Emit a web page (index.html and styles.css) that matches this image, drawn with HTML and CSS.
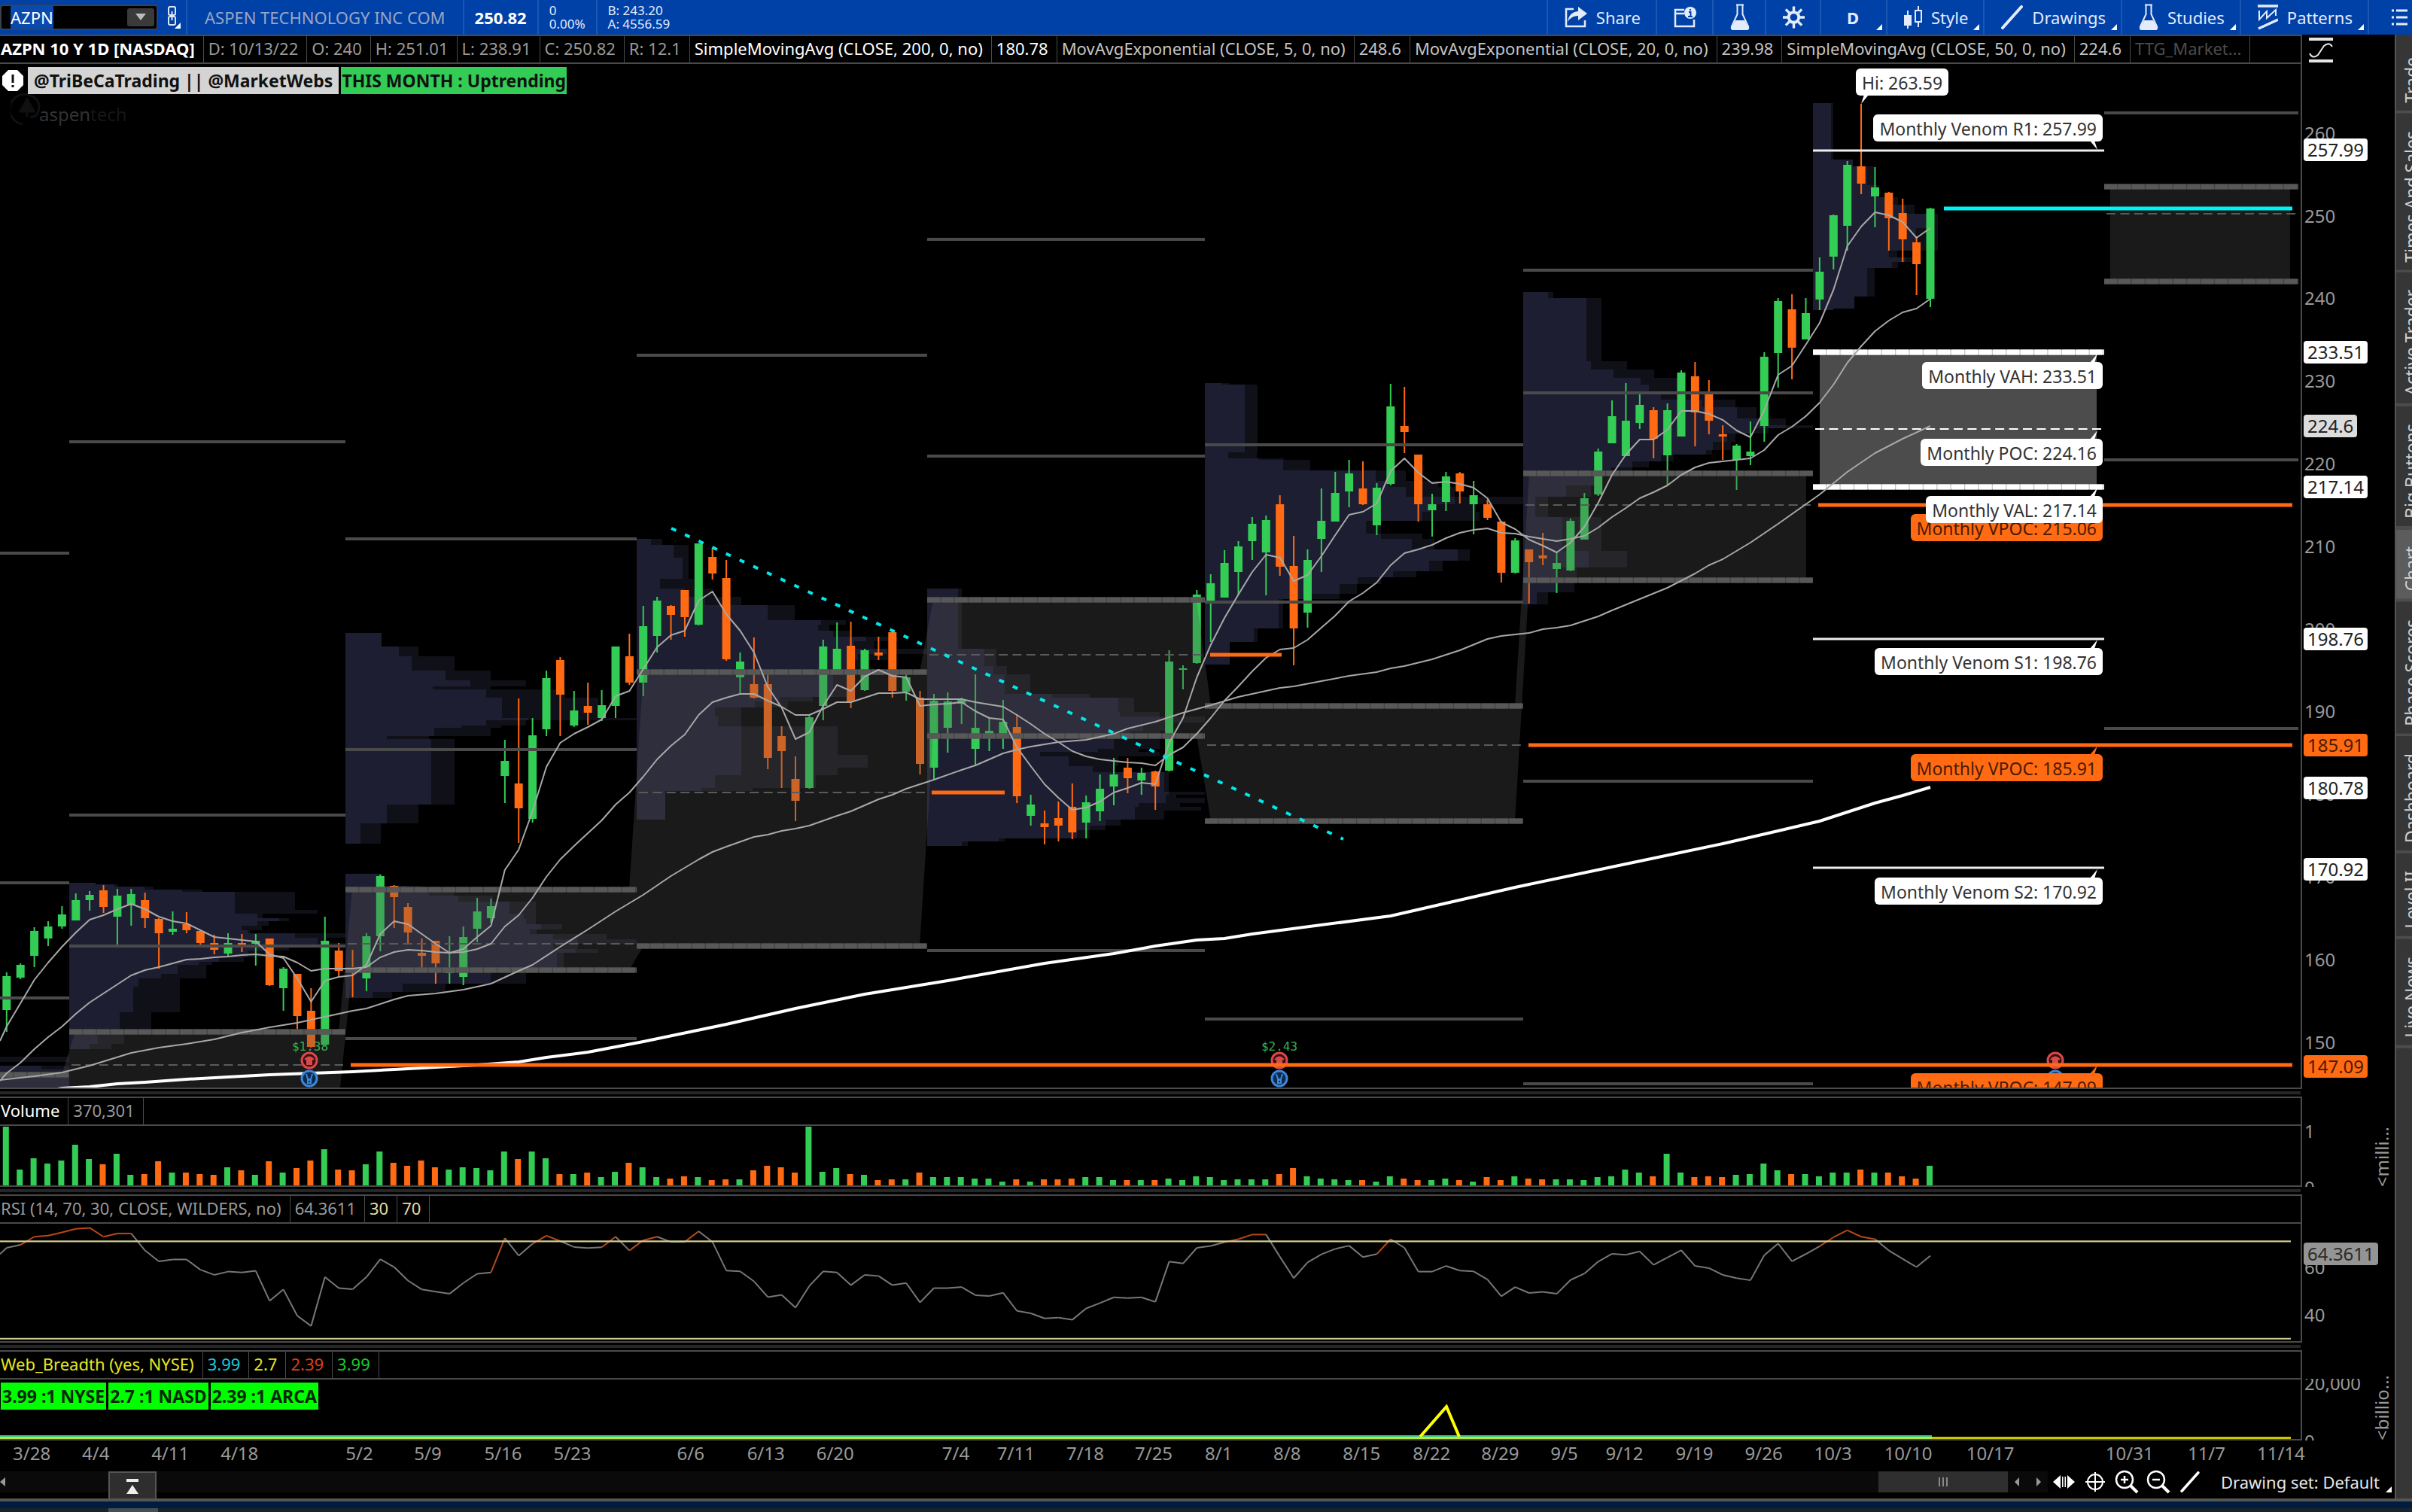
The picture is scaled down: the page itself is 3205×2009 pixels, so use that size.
FILE: index.html
```html
<!DOCTYPE html>
<html lang="en">
<head>
  <meta charset="UTF-8">
  <meta name="viewport" content="width=device-width, initial-scale=1.0">
  <title>AZPN - Charts</title>
  <link rel="stylesheet" href="styles.css">
</head>
<body>

  <!-- Shared icon shapes -->
  <svg class="defs" aria-hidden="true">
    <symbol id="i-flask" viewBox="0 0 26 36">
      <path d="M8 1.500h10M9.500 2v12L2 30q-1 4 2 4h18q3 0 2-4L16.500 14V2" fill="none" stroke="currentColor" stroke-width="2"/>
      <path d="M7 22h12l5 9q1 4-2 4H4q-3 0-2-4z" fill="currentColor"/>
    </symbol>
    <symbol id="i-pencil" viewBox="0 0 29 32">
      <path d="M2 30L27 2" stroke="currentColor" stroke-width="4" stroke-linecap="round"/>
    </symbol>
    <symbol id="i-zoom" viewBox="0 0 32 32">
      <circle cx="13" cy="13" r="11" fill="none" stroke="currentColor" stroke-width="2.500"/>
      <path d="M21 21l9 9" stroke="currentColor" stroke-width="4"/>
      <path d="M8 13h10" stroke="currentColor" stroke-width="2.500"/>
    </symbol>
  </svg>

  <header class="toolbar">
    <div class="symbol-box">
      <label class="sr" for="symbol">Symbol</label>
      <input id="symbol" type="text" value="AZPN">
      <button class="drop" aria-label="Symbol list"><svg viewBox="0 0 36 24"><path d="M11 7h14l-7 9z" fill="#bbb"/></svg></button>
    </div>
    <button class="link" aria-label="Link">
      <svg width="20" height="32" viewBox="0 0 20 32" fill="none" stroke="#dfe6f6" stroke-width="2">
        <rect x="3" y="2" width="9" height="11" rx="2"/><rect x="3" y="15" width="9" height="11" rx="2"/><path d="M7.500 8v12"/>
        <path d="M19 23v8h-8z" fill="#fff" stroke="none"/>
      </svg>
    </button>
    <div class="quote company">ASPEN TECHNOLOGY INC COM</div>
    <div class="quote last">250.82</div>
    <div class="quote small">0<br>0.00%</div>
    <div class="quote small">B: 243.20<br>A: 4556.59</div>
    <div class="spacer"></div>
    <button class="tool">
      <svg width="30" height="28" viewBox="0 0 30 28"><path d="M12 3H2v23h25v-8" fill="none" stroke="currentColor" stroke-width="2.500"/><path d="M4 20Q6 7 18 6V0l12 9-12 9v-6Q9 12 4 20z" fill="currentColor"/></svg>
      <span>Share</span>
    </button>
    <button class="tool" aria-label="Info">
      <svg width="31" height="28" viewBox="0 0 31 28"><path d="M14 4H2v22h25V17M2 9h12" fill="none" stroke="currentColor" stroke-width="2.500"/><circle cx="22" cy="8" r="8" fill="currentColor"/><path d="M22 3v2M20 7h2.500v6M19 13h6" stroke="#0041a8" stroke-width="2" fill="none"/></svg>
    </button>
    <button class="tool" aria-label="Lab"><svg width="26" height="36"><use href="#i-flask"/></svg></button>
    <button class="tool" aria-label="Settings">
      <svg width="29" height="30" viewBox="-15 -15 30 30" fill="none" stroke="currentColor"><circle r="7" stroke-width="4"/><path d="M0-8V-15M0 8V15M-8 0H-15M8 0H15M-6-6L-11-11M6 6L11 11M6-6L11-11M-6 6L-11 11" stroke-width="3.500"/></svg>
    </button>
    <button class="tool menu period">D</button>
    <button class="tool menu">
      <svg width="24" height="30" viewBox="0 0 24 30"><path d="M5 6v24M19 0v28" stroke="currentColor" stroke-width="2"/><rect y="12" width="10" height="14" fill="currentColor"/><rect x="15" y="6" width="8" height="15" fill="#0041a8" stroke="currentColor" stroke-width="2"/></svg>
      <span>Style</span>
    </button>
    <button class="tool menu"><svg width="29" height="32"><use href="#i-pencil"/></svg><span>Drawings</span></button>
    <button class="tool menu"><svg width="26" height="36"><use href="#i-flask"/></svg><span>Studies</span></button>
    <button class="tool menu">
      <svg width="27" height="34" viewBox="0 0 27 34" fill="none" stroke="currentColor"><path d="M0 2h27M1 32L27 20" stroke-width="3.500"/><path d="M2 8v12L12 9v9L24 7v8" stroke-width="2"/></svg>
      <span>Patterns</span>
    </button>
    <button class="tool list" aria-label="Menu">
      <svg width="21" height="24" viewBox="0 0 21 24" stroke="currentColor" stroke-width="3"><path d="M0 3h3M6 3h15M0 12h3M6 12h15M0 21h3M6 21h15"/></svg>
    </button>
  </header>

  <div class="main">
    <main class="work">

      <section class="pane price">
        <div class="left">
          <div class="head">
            <b>AZPN 10 Y 1D [NASDAQ]</b>
            <span>D: 10/13/22</span><span>O: 240</span><span>H: 251.01</span><span>L: 238.91</span><span>C: 250.82</span><span>R: 12.1</span>
            <span class="white">SimpleMovingAvg (CLOSE, 200, 0, no)</span><span class="white">180.78</span>
            <span class="light">MovAvgExponential (CLOSE, 5, 0, no)</span><span class="light">248.6</span>
            <span class="light">MovAvgExponential (CLOSE, 20, 0, no)</span><span class="light">239.98</span>
            <span class="light">SimpleMovingAvg (CLOSE, 50, 0, no)</span><span class="light">224.6</span>
            <span class="dim">TTG_Market...</span>
          </div>
          <div class="plot" id="pricePlot">
            <svg id="priceSvg" viewBox="0 85 3057 1360" preserveAspectRatio="none"></svg>
            <div class="watermark">
              <svg width="42" height="44" viewBox="0 0 42 44" fill="none" stroke="#101010" stroke-width="3"><path d="M16 42A20 20 0 1 1 38 16Q38 34 26 32"/><path d="M22 9l9 16H13z" fill="#101010"/><path d="M22 22v10"/></svg>
              <span><b>aspen</b>tech</span>
            </div>
            <div class="tags">
              <svg class="warn" width="28" height="28" viewBox="0 0 28 28"><path d="M8 0h12l8 8v12l-8 8H8l-8-8V8z" fill="#fff"/><path d="M14 6v11M14 20v3" stroke="#111" stroke-width="3"/></svg>
              <span class="tag grey">@TriBeCaTrading || @MarketWebs</span>
              <span class="tag green">THIS MONTH : Uptrending</span>
            </div>
          </div>
        </div>
        <div class="axis">
          <button class="scale" aria-label="Price scale">
            <svg width="32" height="33" viewBox="0 0 32 33" fill="none" stroke="#e6e6e6"><path d="M0 2h32M0 31h32" stroke-width="4"/><path d="M1 21q4 8 11 2L20 11q7-6 11 1" stroke-width="2"/></svg>
          </button>
          <div class="ticks" id="priceAxis"></div>
        </div>
      </section>

      <div class="split"></div>

      <section class="pane">
        <div class="left">
          <div class="head"><span class="white">Volume</span><span>370,301</span></div>
          <div class="plot low"><svg id="volSvg" viewBox="0 0 3057 79" preserveAspectRatio="none"></svg></div>
        </div>
        <div class="axis">
          <div class="ticks">
            <span class="tick" style="top:10%">1</span><span class="tick" style="top:101%">0</span>
          </div>
          <span class="unit">&lt;milli...</span>
        </div>
      </section>

      <div class="split"></div>

      <section class="pane">
        <div class="left">
          <div class="head"><span>RSI (14, 70, 30, CLOSE, WILDERS, no)</span><span>64.3611</span><span class="cream">30</span><span class="cream">70</span></div>
          <div class="plot mid"><svg id="rsiSvg" viewBox="0 510 3057 434" preserveAspectRatio="none"></svg></div>
        </div>
        <div class="axis">
          <div class="ticks">
            <span class="tick" style="top:37%">60</span><span class="tick" style="top:77%">40</span>
            <span class="badge rsi" style="top:26%">64.3611</span>
          </div>
        </div>
      </section>

      <div class="split"></div>

      <section class="pane">
        <div class="left">
          <div class="head"><span class="yellow">Web_Breadth (yes, NYSE)</span><span class="cyan">3.99</span><span class="yellow">2.7</span><span class="red">2.39</span><span class="lime">3.99</span></div>
          <div class="plot low">
            <svg viewBox="0 1833 3057 79" preserveAspectRatio="none">
              <path d="M2566 1910.500H3044" stroke="#c8c800" stroke-width="3"/>
              <path d="M0 1908H2567" stroke="#2fc48c" stroke-width="2"/>
              <path d="M0 1910.500H2567" stroke="#b4e84a" stroke-width="3"/>
              <path d="M1887 1909L1922 1869L1939 1909" fill="none" stroke="#ff0" stroke-width="4"/>
            </svg>
            <div class="ratios"><span>3.99 :1 NYSE</span><span>2.7 :1 NASD</span><span>2.39 :1 ARCA</span></div>
          </div>
        </div>
        <div class="axis">
          <div class="ticks">
            <span class="tick" style="top:7%">20,000</span><span class="tick" style="top:101%">0</span>
          </div>
          <span class="unit">&lt;billio...</span>
        </div>
      </section>

      <div class="dates" id="dates"></div>

      <footer class="bottom">
        <div class="track">
          <svg class="arrow" width="8" height="12" viewBox="0 0 8 12"><path d="M7 0v12L0 6z" fill="#999"/></svg>
          <button class="up" aria-label="Show panel"><svg width="16" height="20" viewBox="0 0 16 20" fill="#eee"><path d="M0 0h16v4H0zM8 8l8 12H0z"/></svg></button>
          <div class="thumb"><i></i><i></i><i></i></div>
          <svg class="arrows" width="36" height="12" viewBox="0 0 36 12" fill="#999"><path d="M6 0v12L0 6zM29 0v12l6-6z"/></svg>
        </div>
        <button class="nav" aria-label="Fit"><svg width="29" height="20" viewBox="0 0 29 20" fill="#fff"><path d="M0 10L10 1v18zM29 10L19 1v18zM12 3h1.500v14H12zM15.500 3H17v14h-1.500z"/></svg></button>
        <button class="nav" aria-label="Crosshair"><svg width="26" height="26" viewBox="0 0 26 26" fill="none" stroke="#fff" stroke-width="2"><circle cx="13" cy="13" r="10"/><path d="M13 0v26M0 13h26"/></svg></button>
        <button class="nav" aria-label="Zoom in"><svg width="32" height="32"><use href="#i-zoom"/><path d="M13 8v10" stroke="#fff" stroke-width="2.500"/></svg></button>
        <button class="nav" aria-label="Zoom out"><svg width="32" height="32"><use href="#i-zoom"/></svg></button>
        <button class="nav" aria-label="Draw"><svg width="28" height="28"><use href="#i-pencil"/></svg></button>
        <button class="set">Drawing set: Default</button>
      </footer>
    </main>

    <nav class="side">
      <button>Trade</button>
      <button>Times And Sales</button>
      <button>Active Trader</button>
      <button>Big Buttons</button>
      <button class="on">Chart</button>
      <button>Phase Scores</button>
      <button>Dashboard</button>
      <button>Level II</button>
      <button>Live News</button>
    </nav>
  </div>

  <div class="taskbar"><span></span></div>

  <script src="chart.js"></script>
</body>
</html>
```

FILE: styles.css
```css
* {
  box-sizing: border-box;
}

html, body {
  margin: 0;
  height: 100%;
  background: #000;
  overflow: hidden;
}

body {
  display: flex;
  flex-direction: column;
  font-family: "Noto Sans", "Open Sans", sans-serif;
  font-size: 23px;
  line-height: 30px;
  color: #999;
}

button, input {
  font: inherit;
  color: inherit;
  background: none;
  border: 0;
  padding: 0;
  margin: 0;
}

svg {
  display: block;
  flex: none;
}

.defs {
  position: absolute;
  width: 0;
  height: 0;
}

.sr {
  position: absolute;
  width: 1px;
  height: 1px;
  overflow: hidden;
  clip-path: inset(50%);
}

/* Top toolbar */
.toolbar {
  flex: none;
  display: flex;
  align-items: stretch;
  height: 46px;
  background: #0041a8;
  color: #e4ebfa;
  font-size: 22px;
  overflow: hidden;
}

.symbol-box {
  display: flex;
  align-items: center;
  align-self: center;
  width: 210px;
  height: 34px;
  padding: 0 3px 0 12px;
  background: #000;
  border: 2px solid #3b4148;
  border-radius: 4px;
}

#symbol {
  flex: 1;
  min-width: 0;
  height: 30px;
  outline: none;
  color: #fff;
}

#symbol::selection {
  background: #0a49ad;
  color: #fff;
}

.drop {
  width: 36px;
  height: 24px;
  background: #3a3a3a;
  border-radius: 3px;
}

.link {
  width: 37px;
  padding-left: 11px;
}

.quote {
  border-left: 2px solid #1a56b4;
  padding: 0 14px;
  line-height: 46px;
  white-space: nowrap;
}

.company {
  padding: 0 23px;
  color: #9aa6c2;
}

.last {
  font-weight: bold;
  color: #fff;
}

.small {
  font-size: 17px;
  line-height: 18px;
  padding-top: 5px;
}

.small:last-of-type {
  border-right: 2px solid #1a56b4;
}

.spacer {
  flex: 1;
}

.tool {
  position: relative;
  display: flex;
  align-items: center;
  gap: 12px;
  padding: 0 20px 0 22px;
  border-left: 2px solid #1a56b4;
}

.menu::after {
  content: "";
  position: absolute;
  right: 5px;
  bottom: 6px;
  border-left: 8px solid transparent;
  border-bottom: 8px solid #fff;
}

.period {
  padding: 0 36px 0 34px;
  font-weight: bold;
}

.list {
  width: 59px;
  padding: 0 0 0 30px;
}

/* Page body */
.main {
  flex: 1;
  min-height: 0;
  display: flex;
}

.work {
  flex: 1;
  min-width: 0;
  display: flex;
  flex-direction: column;
}

.pane {
  flex: none;
  display: flex;
}

.price {
  flex: 1;
  min-height: 0;
}

.left {
  flex: 1;
  min-width: 0;
  display: flex;
  flex-direction: column;
  border: solid #4a4a4a;
  border-width: 2px 2px 2px 0;
}

.head {
  flex: none;
  display: flex;
  height: 37px;
  font-size: 22px;
  line-height: 33px;
  border-bottom: 2px solid #4a4a4a;
  white-space: nowrap;
  overflow: hidden;
}

.head > * {
  padding: 0 11px 0 6px;
  border-right: 1px solid #4a4a4a;
}

.head > :first-child {
  padding-left: 1px;
}

.head b, .white {
  color: #fff;
}

.light { color: #c4c4c4; }
.dim { color: #4c4c4c; }
.cream { color: #e3dca0; }
.yellow { color: #e6e620; }
.cyan { color: #1fc8dc; }
.red { color: #d8401a; }
.lime { color: #18cc28; }

.plot {
  position: relative;
  overflow: hidden;
}

.price .plot {
  flex: 1;
  min-height: 0;
}

.low {
  height: 79px;
}

.mid {
  height: 156px;
}

.plot > svg {
  position: absolute;
  width: 100%;
  height: 100%;
}

.tags {
  position: relative;
  display: flex;
  align-items: center;
  gap: 3px;
  padding: 4px 3px;
}

.warn {
  margin-right: 3px;
}

.tag {
  padding: 0 1px;
  height: 36px;
  line-height: 36px;
  color: #111;
  font-weight: bold;
  white-space: nowrap;
}

.grey {
  background: #d4d4d4;
  padding: 0 8px;
}

.green {
  background: #33cc55;
}

.watermark {
  position: absolute;
  left: 14px;
  top: 38px;
  display: flex;
  align-items: flex-end;
  color: #161616;
  font-size: 24px;
}

.watermark span {
  margin-left: -4px;
}

.watermark b {
  color: #333;
  font-weight: normal;
}

/* Bubbles on the price chart */
.callout {
  position: absolute;
  height: 36px;
  padding: 0 8px;
  line-height: 38px;
  border-radius: 6px;
  background: #fff;
  color: #333;
  white-space: nowrap;
}

.callout::after {
  content: "";
  position: absolute;
  right: 7px;
  top: -11px;
  width: 10px;
  height: 12px;
  background: inherit;
  clip-path: polygon(100% 0, 0 100%, 60% 100%);
}

.callout.down::after {
  top: 35px;
  clip-path: polygon(0 0, 60% 0, 100% 100%);
}

.callout.hi::after {
  left: 7px;
  right: auto;
  top: 35px;
  clip-path: polygon(40% 0, 100% 0, 0 100%);
}

.callout.orange {
  background: #ff6a13;
  color: #4a1c00;
}

.dividend {
  position: absolute;
  transform: translate(-50%, -50%);
  font: 16px/18px "DejaVu Sans Mono", monospace;
  color: #33b050;
}

/* Right hand axis */
.axis {
  position: relative;
  flex: none;
  width: 123px;
  padding-top: 38px;
  display: flex;
  font-size: 24px;
}

.scale {
  position: absolute;
  left: 9px;
  top: 4px;
}

.ticks {
  position: relative;
  flex: 1;
  overflow: hidden;
}

.tick, .badge {
  position: absolute;
  left: 3px;
  transform: translateY(-50%);
}

.badge {
  left: 2px;
  height: 30px;
  line-height: 30px;
  padding: 0 5px;
  border-radius: 4px;
  background: #fff;
  color: #222;
}

.badge.up { background: #33cc55; color: #0b3315; }
.badge.orange { background: #ff6a13; color: #4a1c00; }
.badge.soft { background: #dcdcdc; }
.badge.rsi { background: #949494; color: #2a2a2a; }

.unit {
  position: absolute;
  right: 2px;
  bottom: 0;
  writing-mode: vertical-rl;
  transform: rotate(180deg);
}

.split {
  flex: none;
  height: 10px;
  margin-right: 125px;
  background: linear-gradient(#000 3px, #262626 3px, #262626 7px, #000 7px);
}

.ratios {
  position: relative;
  display: flex;
  gap: 3px;
  padding: 4px 1px;
}

.ratios span {
  padding: 0 2px;
  line-height: 36px;
  background: #0f0;
  color: #062806;
  font-weight: bold;
}

.dates {
  position: relative;
  flex: none;
  height: 41px;
  margin-right: 123px;
  font-size: 24px;
  line-height: 33px;
}

.dates span {
  position: absolute;
  white-space: nowrap;
}

/* Scroll bar and zoom tools */
.bottom {
  flex: none;
  display: flex;
  align-items: flex-start;
  height: 36px;
  color: #e6e6e6;
  font-size: 22px;
  line-height: 28px;
}

.track {
  flex: 1;
  display: flex;
  align-items: center;
  height: 28px;
  background: #0a0a0a;
}

.up {
  align-self: flex-start;
  display: flex;
  justify-content: center;
  align-items: center;
  width: 64px;
  height: 37px;
  margin-left: 136px;
  background: #2e2e2e;
  border: 2px solid #555;
  border-bottom: 0;
}

.thumb {
  display: flex;
  justify-content: center;
  align-items: center;
  gap: 3px;
  width: 172px;
  height: 28px;
  margin-left: auto;
  background: #2f2f2f;
}

.thumb i {
  width: 2px;
  height: 12px;
  background: #888;
}

.arrows {
  margin: 0 8px 0 9px;
}

.nav {
  display: flex;
  justify-content: center;
  align-items: center;
  width: 42px;
  height: 28px;
  color: #fff;
}

.set {
  position: relative;
  padding: 0 20px 0 20px;
  white-space: nowrap;
}

.set::after {
  content: "";
  position: absolute;
  right: 4px;
  bottom: 0;
  border-left: 8px solid transparent;
  border-bottom: 8px solid #fff;
}

/* Gadget tabs, the strip runs past the window edge */
.side {
  flex: none;
  display: flex;
  flex-direction: column;
  align-items: flex-start;
  width: 23px;
  padding-top: 7px;
  background: #363636;
  border-left: 2px solid #555;
  overflow: hidden;
}

.side button {
  flex: none;
  display: flex;
  justify-content: flex-start;
  align-items: flex-start;
  width: 40px;
  padding: 10px 5px 23px 5px;
  writing-mode: vertical-rl;
  transform: rotate(180deg);
  color: #d0d0d0;
  background: #363636;
  border-top: 4px solid #4c4c4c;
  white-space: nowrap;
}

.side .on {
  background: #5c5c5c;
}

.taskbar {
  flex: none;
  height: 18px;
  border-top: 4px solid #555;
  background: linear-gradient(#001d40 9px, #1a222b 9px);
}

.taskbar span {
  display: block;
  width: 66px;
  height: 5px;
  margin: 9px 0 0 144px;
  background: #474c55;
}
```

FILE: chart.js
```js
const GREEN = '#33cc55';
const ORANGE = '#ff6a13';
const W = 3057, TOP = 85, H = 1360;

const xAt = i => 8.8 + i * 18.39;
const yAt = price => 199.7 + (257.99 - price) * 10.956;
const pctX = x => (x / W * 100).toFixed(3) + '%';
const pctY = y => ((y - TOP) / H * 100).toFixed(3) + '%';

function line(x1, y1, x2, y2, color, width, dash) {
  return `<line x1="${x1}" y1="${y1}" x2="${x2}" y2="${y2}" stroke="${color}" stroke-width="${width}"${dash ? ` stroke-dasharray="${dash}"` : ''}/>`;
}

// each candle: direction, high, body top, body bottom, low
const candles = `g1292,1297,1342,1371 g1280,1282,1299,1301 g1232,1237,1270,1285 g1224,1231,1247,1257 g1204,1215,1231,1234
g1187,1196,1223,1223 g1184,1189,1196,1210 o1176,1183,1205,1213 g1181,1190,1218,1255 g1181,1188,1203,1230
o1186,1196,1220,1233 o1220,1221,1240,1287 g1211,1234,1238,1242 o1212,1228,1236,1240 o1236,1237,1253,1256
o1242,1253,1262,1268 g1240,1253,1267,1271 o1241,1253,1257,1265 g1241,1250,1254,1283 o1247,1247,1309,1310
g1285,1287,1313,1343 o1294,1294,1350,1367 o1313,1343,1391,1392 g1218,1250,1388,1389 o1253,1263,1290,1299
o1262,1290,1292,1325 g1240,1244,1300,1317 g1162,1164,1244,1264 o1176,1177,1192,1233 o1200,1205,1239,1253
o1247,1266,1270,1286 o1250,1250,1280,1307 g1244,1291,1293,1307 g1231,1245,1298,1309 g1193,1211,1234,1252
g1194,1204,1220,1226 g983,1011,1031,1067 o928,1041,1074,1120 g954,977,1088,1093 g891,901,969,978
o873,877,923,978 g918,944,964,966 o907,938,947,963 g917,937,954,958 g859,859,938,954
o842,872,907,910 g805,832,907,925 g793,798,845,867 o804,805,817,850 o784,784,820,846
g722,722,830,831 o728,740,762,770 o744,768,876,878 g867,879,900,922 o847,909,927,928
o896,909,1007,1022 o965,978,998,1047 o1005,1035,1064,1091 g949,953,1047,1048 g850,859,938,957
g827,862,890,891 o826,858,932,941 g862,864,917,918 o846,867,871,877 o839,840,918,927
g895,900,919,931 o918,927,1015,1029 g922,931,1020,1037 g920,932,967,1000 g927,929,935,962
g896,967,995,1017 g954,971,976,998 g930,959,976,995 o949,966,1058,1067 g1056,1069,1084,1097
o1077,1094,1099,1122 o1065,1087,1097,1118 o1041,1072,1106,1115 g1057,1066,1093,1114 g1029,1048,1078,1091
g1007,1029,1045,1070 o1007,1020,1034,1054 g1020,1027,1037,1056 o1024,1025,1045,1076 g864,879,1024,1025
g884,888,890,916 g784,790,881,882 g763,775,801,853 g731,748,794,794 g719,726,760,790
g687,696,719,744 g685,691,734,791 o658,670,753,765 o712,752,835,884 g730,744,814,834
g649,692,716,760 g627,655,693,693 g611,629,653,674 o613,649,670,671 g642,648,698,711
g510,540,643,645 o514,566,574,602 o604,604,670,693 g656,670,678,713 g627,633,667,679
o627,629,653,669 g639,658,670,710 o664,670,688,691 o692,693,761,774 g715,718,761,762
o730,730,747,802 o708,738,742,751 g733,748,756,788 g689,692,758,759 g655,662,717,717
g596,600,657,659 g532,553,589,589 g509,559,606,606 g522,538,562,570 o541,545,583,609
g536,545,605,645 g492,495,580,580 o481,500,548,593 o505,524,559,577 o565,577,580,611
g590,592,611,651 g560,600,606,618 g468,474,566,587 g396,400,469,515 o391,411,462,504
g396,416,451,451 g342,361,398,412 g285,286,341,358 g214,219,300,333 o138,221,244,258
g222,249,261,302 o255,256,290,333 o264,283,318,348 o314,322,351,392 g276,277,397,408`.split(/\s+/);

const ema5 = [1364,1333,1302,1279,1258,1239,1222,1216,1208,1201,1208,1218,1224,1227,1236,1245,1247,1249,1251,1268,1273,1300,1331,1303,1298,1296,1282,1241,1224,1228,1241,1254,1266,1261,1245,1230,1156,1129,1078,1019,987,975,966,956,925,918,889,
  860,844,838,798,786,816,838,867,913,940,982,973,938,910,918,899,890,898,900,938,936,935,933,945,954,956,993,1018,1042,1060,1076,1073,1065,1053,1047,1040,1042,987,954,900,857,821,790,
  760,737,741,772,764,739,711,684,680,669,626,609,628,642,640,643,648,662,694,703,717,725,734,721,700,668,631,604,584,584,571,546,546,550,558,572,581,545,498,486,458,429,385,327,301,282,286,295,316,303];

const ema20 = [1426,1412,1394,1378,1364,1347,1332,1320,1308,1296,1289,1285,1280,1275,1274,1272,1271,1269,1268,1270,1271,1279,1290,1287,1287,1287,1285,1272,1265,1262,1263,1265,1266,1265,1261,1254,1231,1216,1193,1165,1142,1124,1107,1090,1069,1053,1032,
  1009,991,976,950,933,927,922,922,931,939,950,950,942,933,933,927,921,921,920,929,929,929,929,933,936,939,950,962,975,986,998,1005,1009,1011,1013,1014,1017,1003,993,975,954,931,912,
  892,874,863,861,850,834,818,799,788,774,751,735,730,724,715,708,704,702,708,709,713,716,719,716,712,701,687,675,662,654,645,631,621,615,613,611,609,598,578,567,553,535,511,482,460,440,426,415,410,397];

// slower averages, as bar index / y pairs
const sma50 = [[0,1434],[2,1430],[4,1425],[6,1416],[9,1399],[11,1392],[13,1387],[15,1381],[17,1372],[19,1365],[21,1359],[23,1351],[25,1343],[26,1340],[28,1328],[29,1323],[31,1320],[33,1315],[35,1307],[37,1290],[38,1282],[40,1258],[42,1235],[44,1211],[46,1189],[48,1164],[50,1142],[51,1132],[52,1125],[54,1112],[55,1109],[56,1104],[57,1101],[58,1097],[60,1084],[61,1078],[63,1062],[64,1056],[65,1048],[67,1036],[69,1023],[70,1017],[72,1001],[73,996],[74,992],[76,986],[78,983],[80,975],[81,968],[83,959],[85,947],[87,937],[89,926],[92,914],[93,912],[95,905],[97,898],[99,893],[100,888],[101,885],[103,876],[105,864],[107,849],[108,845],[110,841],[111,836],[112,834],[113,831],[115,819],[116,811],[118,796],[120,781],[122,762],[123,751],[124,743],[126,721],[128,696],[129,683],[131,657],[133,627],[135,602],[137,583],[139,566]];
const sma200 = [[3,1449],[4,1446],[6,1444],[8,1440],[10,1438],[13,1434],[16,1431],[19,1428],[22,1426],[25,1424],[28,1421],[31,1418],[34,1415],[37,1411],[39,1405],[42,1398],[44,1391],[46,1384],[52,1361],[57,1340],[62,1321],[68,1303],[75,1280],[80,1267],[83,1257],[86,1249],[88,1247],[90,1241],[100,1217],[109,1179],[117,1148],[124,1121],[128,1104],[131,1091],[133,1079],[135,1067],[137,1057],[139,1046]];

// monthly volume profiles: left edge, bottom, then y / inner width / outer width
const profiles = [
  [0, 1448, '1404,0,92 1411,0,0 1416,55,92 1421,92,92'],
  [92, 1394, '1173,35,35 1175,60,65 1178,100,112 1182,150,177 1185,220,300 1209,220,330 1214,250,257 1220,279,292 1224,250,265 1230,229,256 1236,237,240 1240,300,367 1246,330,342 1253,330,367 1257,268,292 1263,237,260 1272,199,232 1278,172,190 1282,144,182 1294,122,182 1300,92,147 1311,85,147 1345,67,109 1367,38,73 1387,27,56'],
  [459, 1121, '841,48,48 859,71,97 872,88,145 891,133,193 904,166,240 912,116,193 916,187,292 927,208,336 954,243,387 957,187,240 964,154,207 967,118,193 978,55,111 982,114,145 1069,55,97 1094,20,47'],
  [459, 1326, '1161,48,48 1177,81,100 1183,111,144 1190,150,196 1198,218,253 1214,237,253 1221,240,253 1228,260,288 1235,245,254 1241,276,347 1248,309,387 1254,276,309 1261,306,336 1266,281,290 1286,221,248 1292,193,240 1307,76,133 1318,36,62'],
  [846, 1089, '716,19,34 724,49,69 741,61,69 769,31,76 782,64,102 793,91,139 804,174,210 824,245,278 830,241,256 838,261,283 846,305,347 852,289,316 862,332,386 869,294,338 877,283,305 895,261,283 926,190,234 932,157,201 940,104,139 952,108,139 965,139,267 1003,139,307 1020,139,267 1030,104,238 1047,86,154 1051,38,38'],
  [1232, 1124, '782,41,46 862,76,92 885,88,106 896,103,137 922,166,216 927,254,275 946,256,309 952,309,369 960,287,325 971,270,309 981,248,309 995,227,281 999,150,309 1005,188,254 1018,220,248 1026,315,321 1052,321,369 1056,317,331 1060,317,369 1067,281,336 1072,276,364 1077,276,315 1089,237,257 1097,216,237 1103,199,216 1114,95,103 1118,46,54'],
  [1601, 883, '509,22,33 511,53,70 601,31,69 609,72,105 611,104,140 625,227,267 639,245,310 647,267,332 660,332,423 670,299,360 680,289,365 692,214,234 709,234,289 716,275,305 730,336,352 745,298,316 759,250,281 767,203,234 776,179,202 789,140,179 796,98,104 835,65,70 853,33,33'],
  [2024, 803, '388,33,40 396,84,104 456,84,104 480,90,138 491,120,174 502,156,208 511,167,208 523,183,249 531,238,282 541,284,310 556,326,349 565,349,385 569,304,326 576,271,282 587,252,276 598,243,251 604,183,200 613,145,167 621,117,145 631,95,104 645,57,90 660,16,33 687,52,104 732,87,138 754,46,71 774,46,68 787,18,33'],
  [2409, 412, '137,24,27 212,53,53 221,72,82 246,82,87 262,99,113 272,123,135 284,153,166 303,137,166 333,101,112 342,123,137 348,105,113 356,72,82 394,55,55 410,27,27']
];

// month ranges with thin levels, thick value area edges and the dashed POC
const months = [
  [0, 92, [735, 1173, 1326], [1428], null],
  [92, 459, [587, 1083, 1257], [1371], 1415],
  [459, 846, [716, 996, 1380], [1182, 1289], 1254],
  [846, 1232, [472], [893, 1257], 1053],
  [1232, 1601, [318, 606, 1263], [797, 978], 870],
  [1601, 2024, [591, 800, 1354], [938, 1091], 990],
  [2024, 2409, [359, 522, 1038, 1440], [629, 771], 671],
  [2409, 2796, [200, 849, 1153], [468, 647], 570],
  [2796, 3054, [150, 611, 968], [248, 374], 284]
];

function steps(x, bottom, rows, col) {
  let d = '';
  rows.forEach((r, i) => {
    const end = i + 1 < rows.length ? rows[i + 1][0] : bottom;
    d += `M${x} ${r[0]}h${r[col]}V${end}H${x}z`;
  });
  return d;
}

function smooth(points, color, width) {
  return `<polyline points="${points.map(p => p.join(',')).join(' ')}" fill="none" stroke="${color}" stroke-width="${width}" stroke-linejoin="round"/>`;
}

function drawPrice() {
  let s = '';
  for (const [x, bottom, text] of profiles) {
    const rows = text.split(' ').map(r => r.split(',').map(Number));
    s += `<path d="${steps(x, bottom, rows, 2)}" fill="#101018"/><path d="${steps(x, bottom, rows, 1)}" fill="#1e1e32"/>`;
  }

  candles.forEach((c, i) => {
    const [hi, top, bot, lo] = c.slice(1).split(',').map(Number);
    const color = c[0] === 'g' ? GREEN : ORANGE;
    s += line(xAt(i), hi, xAt(i), lo, color, 2);
    s += `<rect x="${(xAt(i) - 5.5).toFixed(1)}" y="${top}" width="11" height="${bot - top}" fill="${color}"/>`;
  });

  // value area shading
  s += '<path d="M0 1428H82L100 1371H450L468 1182H836L855 893H1222L1240 797H1590L1609 938H2013L2032 629H2400V771H2032L2013 1091H1609L1590 978H1240L1222 1257H855L836 1289H468L450 1465H0z" fill="#555" fill-opacity=".3"/>';
  s += '<rect x="2418" y="468" width="368" height="179" fill="#4c4c4c"/>';
  s += '<rect x="2804" y="248" width="239" height="126" fill="#1a1a1a"/>';

  for (const [x1, x2, thin, thick, poc] of months) {
    const live = x1 === 2409;
    for (const y of thin) s += line(x1, y, x2, y, live ? '#eee' : '#4a4a4a', live ? 3 : 4);
    for (const y of thick) {
      s += line(x1, y, x2, y, live ? '#ccc' : '#464646', 7);
      s += line(x1, y, x2, y, live ? '#fff' : '#585858', 7, '17 1.39');
    }
    if (poc) s += line(x1 + 3, poc, x2 - 3, poc, live ? '#fff' : '#5a5a5a', 2, '12 6.4');
  }

  const at = ys => ys.map((y, i) => [xAt(i).toFixed(1), y]);
  const pairs = list => list.map(([i, y]) => [xAt(i).toFixed(1), y]);
  s += smooth([[0, 1383], ...at(ema5)], '#a8a8a8', 2);
  s += smooth([[0, 1436], ...at(ema20)], '#a8a8a8', 2);
  s += smooth([[0, 1435], ...pairs(sma50)], '#a8a8a8', 2);
  s += smooth(pairs(sma200), '#fff', 4);

  // dividend and earnings markers
  for (const x of [411, 1700, 2731]) {
    s += `<circle cx="${x}" cy="1409" r="10" fill="#3a0d10" stroke="#d84a4a" stroke-width="3"/><path d="M${x - 6} 1408q6-7 12 0M${x - 3} 1407h6v7h-6z" stroke="#d84a4a" stroke-width="2" fill="#d84a4a"/>`;
    s += `<circle cx="${x}" cy="1433" r="10" fill="#0c2a4c" stroke="#3d86d8" stroke-width="3"/><path d="M${x - 4} 1427l2 7h4l2-7M${x - 2} 1435h4v4h-4z" stroke="#3d86d8" stroke-width="2" fill="none"/>`;
  }

  s += line(466, 1415, 3046, 1415, ORANGE, 5);
  s += line(1238, 1053, 1335, 1053, ORANGE, 5);
  s += line(1608, 870, 1703, 870, ORANGE, 5);
  s += line(2031, 990, 3046, 990, ORANGE, 5);
  s += line(2416, 671, 3046, 671, ORANGE, 5);
  s += line(2583, 277, 3046, 277, '#00f4f4', 5);
  s += line(892, 702, 1785, 1115, '#00e8e8', 4, '7 13');
  document.getElementById('priceSvg').innerHTML = s;
}

function drawLabels() {
  const callouts = [
    ['Monthly VPOC: 215.06', 683, 'orange'],
    ['Monthly Venom R1: 257.99', 152, 'down'],
    ['Monthly VAH: 233.51', 481, ''],
    ['Monthly POC: 224.16', 583, ''],
    ['Monthly VAL: 217.14', 659, ''],
    ['Monthly Venom S1: 198.76', 861, ''],
    ['Monthly VPOC: 185.91', 1002, 'orange'],
    ['Monthly Venom S2: 170.92', 1166, ''],
    ['Monthly VPOC: 147.09', 1426, 'orange']
  ];
  let s = callouts.map(([text, y, cls]) =>
    `<div class="callout ${cls}" style="right:${pctX(W - 2794)};top:${pctY(y)}">${text}</div>`).join('');
  s += `<div class="callout hi" style="left:${pctX(2466)};top:${pctY(91)}">Hi: 263.59</div>`;
  s += `<div class="dividend" style="left:${pctX(412)};top:${pctY(1391)}">$1.38</div>`;
  s += `<div class="dividend" style="left:${pctX(1700)};top:${pctY(1391)}">$2.43</div>`;
  document.getElementById('pricePlot').insertAdjacentHTML('beforeend', s);

  let axis = '';
  for (let p = 260; p >= 150; p -= 10) {
    axis += `<span class="tick" style="top:${pctY(yAt(p))}">${p}</span>`;
  }
  const badges = [['257.99', ''], ['250.82', 'up'], ['233.51', ''], ['224.6', 'soft'], ['217.14', ''], ['198.76', ''],
    ['185.91', 'orange'], ['180.78', ''], ['170.92', ''], ['147.09', 'orange']];
  for (const [p, cls] of badges) {
    axis += `<span class="badge ${cls}" style="top:${pctY(yAt(+p))}">${p}</span>`;
  }
  document.getElementById('priceAxis').innerHTML = axis;
}

// bar heights, negative = down day
const volume = [78,21,36,29,33,54,35,-28,42,14,-15,-32,17,-17,-15,-14,24,-20,14,-32,17,-23,-33,48,-21,-20,28,45,-30,-26,-33,-24,21,24,23,20,45,-35,45,36,-15,15,-17,11,18,-30,24,11,-9,-12,11,-7,-8,8,-20,-26,-24,-17,78,18,
  23,-15,14,-7,-8,8,-17,11,11,11,9,9,5,-8,5,-8,-8,-9,11,11,7,-7,7,-7,9,7,12,11,7,8,8,8,-15,-23,12,9,8,7,-7,5,12,-9,-7,7,9,-7,5,-11,-7,12,-9,-8,8,8,7,11,12,
  21,17,-12,42,17,-11,-12,-11,14,15,29,20,-15,15,12,17,17,-21,17,-17,-12,-9,26];

const rsi = [599,588,558,554,542,529,525,558,546,546,609,649,642,642,680,699,687,690,684,795,753,850,888,707,748,752,707,641,670,720,753,761,769,729,695,690,563,628,584,554,574,596,600,597,558,609,571,558,577,577,538,577,683,686,723,781,773,820,740,686,
  690,737,699,703,737,729,801,748,748,744,774,777,765,832,841,860,857,865,823,803,782,785,782,799,650,657,599,592,578,567,550,550,632,711,653,623,603,591,633,622,567,599,687,687,666,683,686,716,778,744,766,762,769,718,694,650,621,
  625,612,662,635,608,666,674,699,711,719,626,583,649,622,593,560,534,558,567,609,640,670,628];

function drawStudies() {
  document.getElementById('volSvg').innerHTML = volume.map((v, i) =>
    `<rect x="${(xAt(i) - 5).toFixed(1)}" y="${79 - Math.abs(v)}" width="8" height="${Math.abs(v)}" fill="${v > 0 ? GREEN : ORANGE}"/>`).join('');

  let s = '';
  let px = 0, py = 622;
  rsi.forEach((y, i) => {
    s += line(px, py, xAt(i), y, y < 575 ? '#b8481a' : '#777', 2).replace('/>', ' vector-effect="non-scaling-stroke"/>');
    px = xAt(i);
    py = y;
  });
  s += line(0, 575, 3044, 575, '#d2cd90', 6) + line(0, 935, 3044, 935, '#d2cd90', 6);
  document.getElementById('rsiSvg').innerHTML = s;
}

const dates = { '3/28': 17, '4/4': 109, '4/11': 201, '4/18': 293, '5/2': 459, '5/9': 550, '5/16': 643, '5/23': 735, '6/6': 899, '6/13': 992,
  '6/20': 1084, '7/4': 1251, '7/11': 1324, '7/18': 1416, '7/25': 1507, '8/1': 1600, '8/8': 1691, '8/15': 1783, '8/22': 1876, '8/29': 1967,
  '9/5': 2059, '9/12': 2132, '9/19': 2225, '9/26': 2317, '10/3': 2409, '10/10': 2502, '10/17': 2611, '10/31': 2796, '11/7': 2905, '11/14': 2997 };

document.getElementById('dates').innerHTML = Object.entries(dates)
  .map(([d, x]) => `<span style="left:${pctX(x)}">${d}</span>`).join('');

drawPrice();
drawLabels();
drawStudies();

const symbol = document.getElementById('symbol');
symbol.focus();
symbol.select();
```
